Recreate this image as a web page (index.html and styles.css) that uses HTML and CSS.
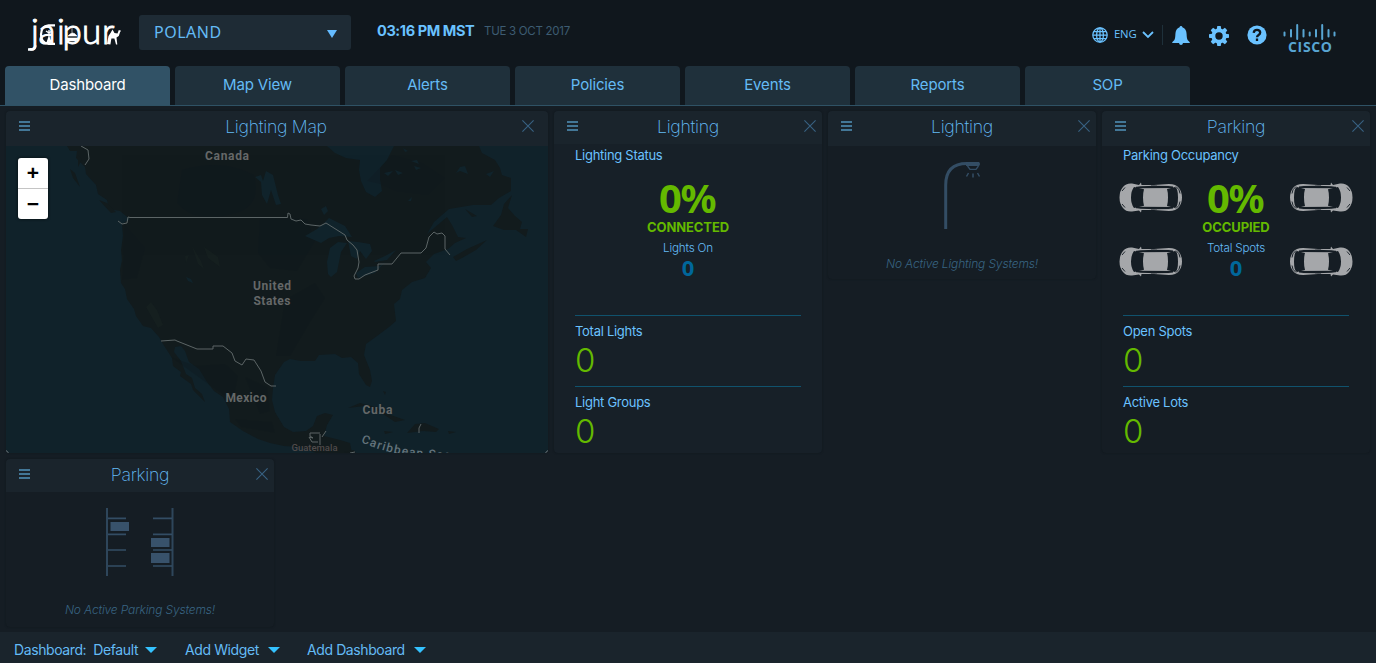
FILE: index.html
```html
<!DOCTYPE html>
<html lang="en">
<head>
<meta charset="utf-8">
<title>Dashboard</title>
<link rel="stylesheet" href="styles.css">
</head>
<body>
<svg class="defs" width="0" height="0">
  <symbol id="menu" viewBox="0 0 11 10"><path d="M0 0h11v2H0zM0 4h11v2H0zM0 8h11v2H0z"/></symbol>
  <symbol id="close" viewBox="0 0 12 12"><path d="M.4.4l11.2 11.2M11.600.4L.4 11.600" fill="none" stroke="currentColor" stroke-width="1.1"/></symbol>
  <symbol id="car" viewBox="0 0 64 31">
    <path fill="#a5a7aa" fill-rule="evenodd" d="M20 3L22 .5 22.500 3H35L50 2q7 0 10 4 3 4 3 9.500t-3 9.500q-3 4-10 4L35 28H22.500L22 30.500 20 28.500 13 29.500Q7 30 4 26 .5 22 .5 15.500T4 5Q7 1 13 1.500zM12 15.500q0 6.500 3 10.500 5-1 10-2.300-1-3.500-1-8.200t1-8.200Q20 6 15 5 12 9 12 15.500M18 4.500l9 1.300 20-.3L54 4 35 3.700zM18 26.500l17 .8 19-.3-7-1.500-20-.3zM48 7q1 3 1 8.500T48 24l8 2q3-1 3-10.500T56 5z"/>
    <path d="M3 9l3-3.500M3 22l3 3.500M57 4.500q4 3 4 7M57 26.500q4-3 4-7M32 4l6 .2M32 27l6-.2" stroke="#20282f" stroke-width="1" fill="none"/>
    <path d="M17 5.500L54 5.200M17 25.500l37 .3" stroke="#151d24" stroke-width="1.500"/>
  </symbol>
</svg>

<header class="topbar">
  <svg class="brand" width="96" height="36" viewBox="26 17 96 36">
    <g class="brand-word">
      <text y="44"><tspan x="31">j</tspan><tspan x="38.500">a</tspan><tspan x="57">i</tspan><tspan x="62.500">p</tspan><tspan x="82">u</tspan><tspan x="102">r</tspan></text>
    </g>
    <path d="M28 49.500h3.500q3.500 0 3.800-4" fill="none" stroke="#fff" stroke-width="2.600"/>
    <path d="M55 25.300h-6.500q-7.500.7-7.500 9.300t7.500 9.200H55" stroke="#fff" fill="none" stroke-width="2.200"/>
    <path d="M49 30v13M46 31l3 2 3-2M47 43l2-6 2 6" stroke="#fff" fill="none" stroke-width="1.300"/>
    <path d="M68 36q5-6 9 0zM66 38h12l-2 3h-8zM72 28v6" fill="#fff" stroke="#fff" stroke-width=".6"/>
    <path d="M107 44l1.500-8 2-3 2-3.500 2 3.500 3 .5 1.300-3.500 2.300.7-1 1.300-1.300 4-2.300 1.500.8 7h-1.300l-1.600-6-3 0-1 6z" fill="#fff"/>
  </svg>
  <div class="location"><span>POLAND</span><i class="loc-arrow"></i></div>
  <div class="clock">03:16 PM MST</div>
  <div class="date">TUE 3 OCT 2017</div>
  <div class="tools">
    <svg class="globe" width="16" height="16" viewBox="0 0 16 16" fill="none" stroke="currentColor" stroke-width="1.250"><circle cx="8" cy="8" r="7.200"/><ellipse cx="8" cy="8" rx="3.400" ry="7.200"/><path d="M8 1v14M1 8h14M1.800 4.500h12.400M1.800 11.500h12.400"/></svg>
    <span class="lang">ENG</span>
    <svg class="chev" width="12" height="8" viewBox="0 0 12 8"><path d="M1 1l5 5 5-5" fill="none" stroke="currentColor" stroke-width="1.800"/></svg>
    <i class="sep"></i>
    <svg class="bell" width="18" height="19" viewBox="0 0 18 19"><path fill="currentColor" d="M9 0q1.300 0 1.400 1.300Q14.500 3 14.600 8q.1 5 1.200 6.200Q17.800 16 18 17h-7q-.3 2-2 2t-2-2H0q.2-1 2.200-2.800Q3.300 13 3.400 8 3.500 3 7.600 1.300 7.700 0 9 0"/></svg>
    <svg class="gear" width="20" height="20" viewBox="-10 -10 20 20"><g fill="currentColor"><path fill-rule="evenodd" d="M-7.500 0a7.500 7.500 0 1 0 15 0 7.500 7.500 0 1 0-15 0M-3.700 0a3.700 3.700 0 1 1 7.400 0 3.700 3.700 0 1 1-7.400 0"/><path id="tooth" d="M-2.300-6.700L-1.700-10h3.400l.6 3.300z"/><use href="#tooth" transform="rotate(45)"/><use href="#tooth" transform="rotate(90)"/><use href="#tooth" transform="rotate(135)"/><use href="#tooth" transform="rotate(180)"/><use href="#tooth" transform="rotate(225)"/><use href="#tooth" transform="rotate(270)"/><use href="#tooth" transform="rotate(315)"/></g></svg>
    <svg class="help" width="20" height="20" viewBox="0 0 20 20"><circle cx="10" cy="10" r="9.600" fill="currentColor"/><path d="M6.700 7.800Q7 4.800 10 4.800t3.200 2.600q0 1.500-1.600 2.500T10 12.200M10 13.600v2.400" fill="none" stroke="#10171d" stroke-width="2.300"/></svg>
    <svg class="cisco" width="54" height="30" viewBox="0 0 54 30"><path d="M1.500 8.500v3M8 6v6.500M14.200 1v14M20.500 6v6.500M26.700 8.500v3M33 6v6.500M39.200 1v14M45.500 6v6.500M51.500 8.500v3" stroke="#58a5d2" stroke-width="2" stroke-linecap="round" fill="none"/><text x="5" y="28" textLength="44">CISCO</text></svg>
  </div>
</header>

<nav class="tabs">
  <a class="tab active">Dashboard</a><a class="tab">Map View</a><a class="tab">Alerts</a><a class="tab">Policies</a><a class="tab">Events</a><a class="tab">Reports</a><a class="tab">SOP</a>
</nav>

<main class="board">
  <section class="widget wide">
    <h2 class="head"><svg class="menu"><use href="#menu"/></svg><span>Lighting Map</span><svg class="close"><use href="#close"/></svg></h2>
    <div class="map">
      <svg class="map-art" width="542" height="307" viewBox="6 146 542 307">
        <rect x="6" y="146" width="542" height="307" fill="#10222a"/>
        <g fill="#121b1d">
          <path d="M67 146L70 151 77 151 76 158 85 167 86 174 96 185 98 194 107 200 109 209 120 211 126 216 130 219 122 224 123 236 121 250 122 260 120 270 121 283 125 289 127 299 134 309 136 316 143 326 151 328 159 337 163 344 172 358 173 366 181 372 180 376 191 384 193 390 205 402 202 394 195 388 192 378 186 374 181 361 174 352 175 347 181 346 185 351 189 362 199 369 207 382 214 391 223 397 229 409 230 422 243 431 258 439 270 443 284 446 300 447 316 453 352 453 350 443 340 440 324 436 327 425 333 415 325 413 317 416 313 426 306 431 293 432 284 427 275 412 272 400 273 388 275 375 284 362 290 359 301 361 315 361 319 355 335 354 342 358 351 357 358 363 359 374 366 385 370 387 372 381 370 370 364 355 366 344 377 336 389 327 396 321 394 304 400 299 402 290 412 282 425 278 431 268 426 262 434 254 448 249 455 243 466 238 458 237 452 225 447 217 427 234 434 222 449 209 473 205 491 205 499 198 511 191 511 178 502 175 500 168 495 160 482 153 479 146 394 146 387 160 380 168 380 179 382 191 375 197 366 192 361 181 359 170 360 160 346 158 335 153 327 146Z"/>
          <path d="M493 226L501 215 504 204 512 195 508 208 515 216 522 222 520 229 528 229 526 237 516 230 504 230Z"/>
          <path d="M453 257L467 249 487 240 476 250 462 258 456 261ZM465 209l12 7-5 1zM78 155l4 4-4 8zM70 169l5 4 5 14-7-9zM99 200l8 3 9 9-5 1z"/>
          <path d="M348 408L360 403 375 407 388 414 405 420 395 422 380 412 365 406ZM415 424L425 423 439 429 436 432 423 431 407 433ZM384 431l9 1-8 2zM448 431l8 1-7 2zM344 452l10-2 2 3zM383 391l3 1-1 3z"/>
        </g>
        <g fill="#0d171c" opacity=".3">
          <path d="M182 170q40-12 72 5 8 30-18 38-40 12-59-10zM260 218l47 1 8 22-18 30-27-3-12-15zM285 300l30-17 10 15-15 24-20 34h-14zM171 357l25 9 29-2 13 12-5 25-22-15z"/>
          <path d="M367 181l25-26 30 8 23 15-17 17-32-4-16-7zM125 225l20 23-8 30-15 2zM245 377l22 10 3 24-10 3zM235 419l37 3 3 11-34-6z" opacity=".75"/>
        </g>
        <g fill="#182321" opacity=".55"><path d="M192 246l9 15 3 8-6-5zM204 247l14 10 2 10-12-9zM151 302l6 8 6 15-5 3-12-21zM185 256l4-1-3 8z"/></g>
        <g fill="#10232b">
          <path d="M255 177l6-2 2 6 3-10 7 4 5 20 3 9-5 1-5-15-4 14-5-9-1-13z"/>
          <path d="M305 236l12-7 7-6 5-5 16 8 7 11-13-1-10 2-8 5zM328 274l-1-12 3-14 8-6 9 1-6 9-4 20-6 5zM348 241l10 1 12 2 2 7-6 8-6-8-3 8-6-3zM356 273l9-6 15-1 5-4-10 11-17 5zM374 261l11-5 11-6-9 10-12 2z"/>
          <path d="M384 173l9-2-5 5zM395 170l8 3-5 2zM403 148l5 3-3 1zM411 161l6-1 2 4zM414 166l7 2-5 2zM456 173l4-6 5-1 3 8-8-3zM486 174l8-3-4 6zM408 201l4-4-1 4zM321 209l5-3 2 5-4 4z"/>
          <path d="M186 277l5 2 2 4-5-2z"/>
        </g>
        <g fill="none" stroke="#5c6566" stroke-width="1">
          <path d="M81 146l7 4 1 9-4 6M118 221l4 3 5-1 1-6 2 .5H287.500L288 213l2 1 1 5 5 2 5-1 4 4 6 1 9 1 6-3 19 12 2 5 6 5 4 5 2 12-1 6-4 8 1 3 4 0 6-4 13-5v-6h14l9-11h20l5-5 3-11 5-5 3 2 5-1 3 3v13l5 6"/>
          <path d="M161 341l14-1 2 1 20 8h16v-3h10l9 7 3 8 7 4 4-6 8 1 7 11 4 11 6 4h5M320 433h-10v3l3 2-4-1 3 5h6M320 434v11M322 437l4-6M421 424l-2 4v5M350 453l5-1"/>
        </g>
        <g class="map-label">
          <text x="205" y="160" textLength="44">Canada</text>
          <text x="253" y="290" textLength="38">United</text>
          <text x="253.500" y="305" textLength="37">States</text>
          <text x="225.500" y="402" textLength="41">Mexico</text>
          <text x="362.500" y="414" textLength="30">Cuba</text>
          <text class="faint" x="291.500" y="451" textLength="46">Guatemala</text>
        </g>
        <path id="sea" d="M361 442q38 18 100 17" fill="none"/>
        <text class="sea-label"><textPath href="#sea" textLength="92">Caribbean Sea</textPath></text>
        <path d="M6 450v3h3zM548 450v3h-3z" fill="#9aa3a8"/>
      </svg>
      <div class="zoom"><b>+</b><b>−</b></div>
    </div>
  </section>

  <section class="widget tall lit">
    <h2 class="head"><svg class="menu"><use href="#menu"/></svg><span>Lighting</span><svg class="close"><use href="#close"/></svg></h2>
    <div class="stats">
      <h3>Lighting Status</h3>
      <div class="gauge"><strong>0%</strong><em>CONNECTED</em><small>Lights On</small><b>0</b></div>
      <div class="stat"><h3>Total Lights</h3><p>0</p></div>
      <div class="stat"><h3>Light Groups</h3><p>0</p></div>
    </div>
  </section>

  <section class="widget">
    <h2 class="head"><svg class="menu"><use href="#menu"/></svg><span>Lighting</span><svg class="close"><use href="#close"/></svg></h2>
    <div class="empty">
      <svg class="empty-art" width="68" height="70" viewBox="928 160 68 70" fill="none" stroke="#334d64"><path d="M945.700 229V185Q945.700 163.500 967 163.500H979" stroke-width="3"/><path d="M966 162h13q2 2 0 4h-13" fill="#334d64" stroke="none"/><path d="M967.500 166l2.500 3.400h6l2.500-3.400" stroke-width="1.300"/><path d="M968.500 173l-2 3.500M973 173.500v4M977.500 173l2 3.500" stroke-width="1.500"/></svg>
      <p>No Active Lighting Systems!</p>
    </div>
  </section>

  <section class="widget tall">
    <h2 class="head"><svg class="menu"><use href="#menu"/></svg><span>Parking</span><svg class="close"><use href="#close"/></svg></h2>
    <div class="stats">
      <h3>Parking Occupancy</h3>
      <div class="gauge">
        <div class="cars"><svg><use href="#car"/></svg><svg class="flip"><use href="#car"/></svg><svg><use href="#car"/></svg><svg class="flip"><use href="#car"/></svg></div>
        <strong>0%</strong><em>OCCUPIED</em><small>Total Spots</small><b>0</b>
      </div>
      <div class="stat"><h3>Open Spots</h3><p>0</p></div>
      <div class="stat"><h3>Active Lots</h3><p>0</p></div>
    </div>
  </section>

  <section class="widget second">
    <h2 class="head"><svg class="menu"><use href="#menu"/></svg><span>Parking</span><svg class="close"><use href="#close"/></svg></h2>
    <div class="empty">
      <svg class="empty-art" width="68" height="70" viewBox="106 507 68 70"><path d="M107 508v68M172.500 508v68" stroke="#2e465b" stroke-width="2"/><path d="M108 518.300h18M108 534.300h18M108 550h18M108 566h18M153 518.300h19M153 534.300h19M153 550h19M153 566h19" stroke="#334d64" stroke-width="1.700"/><path d="M110.500 522H129v9h-18.500zM151 538h18.500v9H151zM151 553h18.500v10H151z" fill="#38526b"/></svg>
      <p>No Active Parking Systems!</p>
    </div>
  </section>
</main>

<footer class="bottombar">
  <span class="pick f1">Dashboard:&nbsp; Default<i></i></span><span class="pick f2">Add Widget<i></i></span><span class="pick f3">Add Dashboard<i></i></span>
</footer>
</body>
</html>
```
FILE: styles.css
```css
* { box-sizing: border-box; }
body {
  margin: 0;
  width: 1376px;
  height: 663px;
  overflow: hidden;
  display: flex;
  flex-direction: column;
  background: #151d24;
  color: #64bbf5;
  font-family: Inter, "Liberation Sans", sans-serif;
}
svg { display: block; flex: none; }
.defs { position: absolute; }
h2, h3, p { margin: 0; font-weight: 300; }

.topbar {
  flex: none;
  height: 66px;
  display: flex;
  align-items: flex-start;
  background: #10171d;
}
.brand { margin: 17px 0 0 26px; overflow: visible; }
.brand-word { font: 300 35px Lato, sans-serif; fill: #fff; stroke: #fff; stroke-width: 1; }
.location {
  margin: 15px 0 0 17px;
  width: 212px;
  height: 35px;
  padding: 0 14px 0 15px;
  display: flex;
  align-items: center;
  justify-content: space-between;
  border-radius: 3px;
  background: #1e2b35;
  font: 16px/34px "Noto Sans", sans-serif;
  letter-spacing: 0.5px;
}
.location span { margin-top: -2px; }
.loc-arrow {
  margin-top: 3px;
  border: 5px solid transparent;
  border-top: 8px solid #64bbff;
  border-bottom: 0;
}
.clock { margin: 22px 0 0 26px; width: 107px; font-size: 14.5px; font-weight: 700; line-height: 18px; letter-spacing: -0.4px; white-space: nowrap; color: #6ac2ff; }
.date { margin-top: 23px; font-size: 11.5px; line-height: 16px; letter-spacing: -0.27px; color: #3d5c72; }
.tools { margin-left: auto; width: 284px; display: flex; color: #6ac2ff; }
.globe { margin-top: 27px; }
.lang { margin: 26px 0 0 6px; width: 22px; font: 11.3px/15px "Open Sans", sans-serif; letter-spacing: -0.2px; }
.chev { margin: 31px 0 0 6px; }
.sep { margin: 25px 0 0 8px; width: 1px; height: 20px; background: #1e303a; }
.bell { margin: 26px 0 0 8.5px; }
.gear { margin: 26px 0 0 19px; }
.help { margin: 25px 0 0 18px; }
.cisco { margin: 24px 0 0 16px; overflow: visible; }
.cisco text { font: 700 14px "Open Sans", sans-serif; fill: #58a5d2; }

.tabs {
  flex: none;
  height: 40px;
  padding-left: 5px;
  display: flex;
  gap: 5px;
  background: #10171d;
  border-bottom: 1px solid #2f5265;
}
.tab {
  width: 165px;
  border-radius: 4px 4px 0 0;
  background: #1f303b;
  font-size: 15px;
  line-height: 38px;
  letter-spacing: -0.15px;
  text-align: center;
}
.tab.active { background: #315266; color: #fff; }

.board {
  flex: none;
  height: 526px;
  padding: 5px 6px 0;
  display: grid;
  grid-template-columns: repeat(5, 268px);
  grid-auto-rows: 168px;
  gap: 6px;
}
.widget { border-radius: 4px; box-shadow: 0 0 2px #10171c; background: #151d24; overflow: hidden; }
.wide { grid-column: span 2; grid-row: span 2; }
.tall { grid-row: span 2; }
.second { grid-column: 1; }
.lit { background: #172028; }
.head {
  height: 35px;
  padding: 0 6px 0 13px;
  display: grid;
  grid-template-columns: 11px 1fr 12px;
  align-items: start;
  background: #1a242c;
  font-size: 17.7px;
  font-weight: 200;
  line-height: 31px;
  letter-spacing: -0.3px;
  text-align: center;
}
.head span { padding-right: 6px; }
.wide .head { padding-right: 14px; }
.wide .head span { padding-right: 0; }
.lit .head, .second .head { height: 33px; }
.menu { width: 11px; height: 10px; margin-top: 10px; fill: #437797; }
.close { width: 12px; height: 12px; margin-top: 9px; color: #386282; }

.map { position: relative; }
.map-label { font: 700 12px Roboto, sans-serif; fill: #656868; }
.map-label .faint { font-size: 9.500px; font-weight: 500; fill: #4f4a4a; }
.sea-label { font: 500 12px Roboto, sans-serif; fill: #64747c; }
.zoom {
  position: absolute;
  left: 12px;
  top: 12px;
  width: 30px;
  border-radius: 3px;
  background: #fff;
  box-shadow: 0 0 3px #05090c;
  color: #000;
  font: 700 21px/30px "Liberation Sans", sans-serif;
  text-align: center;
}
.zoom b { display: block; height: 30px; }
.zoom b + b { height: 31px; border-top: 1px solid #c4c4c4; }

.stats { padding: 0 21px; }
.stats h3 { font-size: 13px; line-height: 18px; letter-spacing: -0.28px; font-weight: 400; color: #6ac2ff; }
.lit .stats { padding-top: 2px; }
.gauge {
  position: relative;
  height: 151px;
  padding-top: 13px;
  display: flex;
  flex-direction: column;
  align-items: center;
}
.gauge strong { margin-left: -2px; font: 700 40px/42px "Noto Sans", sans-serif; letter-spacing: -1.500px; color: #64b900; }
.gauge em { font-size: 13px; font-style: normal; font-weight: 700; line-height: 16px; color: #64b900; letter-spacing: -0.1px; }
.gauge small { margin-top: 6px; font-size: 11.7px; font-weight: 300; line-height: 14px; letter-spacing: -0.2px; }
.gauge b { font: 700 22px/24px "Noto Sans", sans-serif; color: #00679b; }
.cars {
  position: absolute;
  left: -4px;
  top: 18px;
  display: grid;
  grid-template-columns: 64px 64px;
  gap: 33px 106px;
}
.cars svg { width: 64px; height: 31px; }
.flip { transform: scaleX(-1); }
.stat { height: 71px; border-top: 1px solid #10526d; padding-top: 6px; }
.stats .stat p { margin-top: 3px; font-size: 33px; line-height: 34px; color: #64b900; }

.empty { display: flex; flex-direction: column; align-items: center; }
.empty-art { margin-top: 14px; }
.second .empty-art { margin-top: 15px; }
.empty p { margin-top: 26px; font-size: 12px; font-style: italic; line-height: 16px; letter-spacing: -0.15px; color: #386482; }
.second .empty p { margin-top: 25px; }

.bottombar {
  flex: none;
  height: 31px;
  display: flex;
  background: #1a242c;
  font-size: 14px;
  line-height: 36px;
  letter-spacing: -0.4px;
}
.pick { height: 36px; display: flex; align-items: center; justify-content: space-between; white-space: nowrap; }
.pick i { border: 6.500px solid transparent; border-top-color: #34c2ff; border-bottom: 0; }
.f1 { margin-left: 14px; width: 143px; }
.f2 { margin-left: 28px; width: 95px; }
.f3 { margin-left: 27px; width: 119px; }
```
